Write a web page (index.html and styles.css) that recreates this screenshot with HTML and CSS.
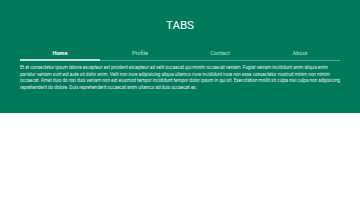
FILE: index.html
```html
<!DOCTYPE html>
<html>
<head>
<meta charset="utf-8">
<link rel="stylesheet" href="styles.css">
</head>
<body>
<div class="app">
  <h1 class="title">TABS</h1>
  <div class="tabs">
    <div class="tab active">Home</div>
    <div class="tab">Profile</div>
    <div class="tab">Contact</div>
    <div class="tab">About</div>
  </div>
  <p class="content">Et et consectetur ipsum labore excepteur est proident excepteur ad velit occaecat qui minim occaecat veniam. Fugiat veniam incididunt anim aliqua enim pariatur veniam sunt est aute sit dolor anim. Velit non irure adipisicing aliqua ullamco irure incididunt irure non esse consectetur nostrud minim non minim occaecat. Amet duis do nisi duis veniam non est eiusmod tempor incididunt tempor dolor ipsum in qui sit. Exercitation mollit sit culpa nisi culpa non adipisicing reprehenderit do dolore. Duis reprehenderit occaecat anim ullamco ad duis occaecat ex.</p>
</div>
</body>
</html>
```
FILE: styles.css
```css
html, body {
  margin: 0;
  padding: 0;
  background: #ffffff;
}
body {
  font-family: Roboto, "Liberation Sans", sans-serif;
}
.app {
  background: #017a5b;
  padding: 18px 20px 21px;
  color: #ffffff;
}
.title {
  margin: 0;
  text-align: center;
  font-size: 11.5px;
  line-height: 14px;
  font-weight: 400;
}
.tabs {
  display: flex;
  margin-top: 15px;
  border-bottom: 1px solid rgba(255, 255, 255, 0.35);
}
.tab {
  flex: 1;
  text-align: center;
  font-size: 5.6px;
  line-height: 6px;
  padding: 3px 0 3px;
  color: rgba(255, 255, 255, 0.78);
  border-bottom: 2px solid transparent;
  margin-bottom: -1px;
}
.tab.active {
  color: #ffffff;
  font-weight: 700;
  border-bottom-color: #c9ded7;
}
.content {
  margin: 4px 0 0;
  font-size: 4.6px;
  letter-spacing: -0.025px;
  line-height: 6.7px;
  color: rgba(255, 255, 255, 0.92);
}
```
